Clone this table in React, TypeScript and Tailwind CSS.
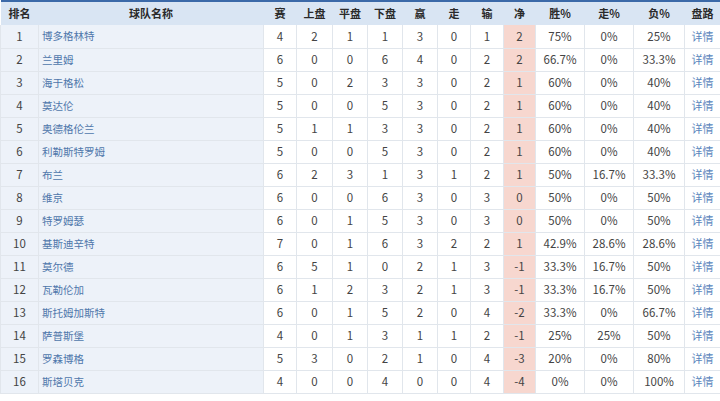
import React from 'react';

type Row = [number, string, number, number, number, number, number, number, number, number, string, string, string];

const rows: Row[] = [
  [1, '博多格林特', 4, 2, 1, 1, 3, 0, 1, 2, '75%', '0%', '25%'],
  [2, '兰里姆', 6, 0, 0, 6, 4, 0, 2, 2, '66.7%', '0%', '33.3%'],
  [3, '海于格松', 5, 0, 2, 3, 3, 0, 2, 1, '60%', '0%', '40%'],
  [4, '莫达伦', 5, 0, 0, 5, 3, 0, 2, 1, '60%', '0%', '40%'],
  [5, '奥德格伦兰', 5, 1, 1, 3, 3, 0, 2, 1, '60%', '0%', '40%'],
  [6, '利勒斯特罗姆', 5, 0, 0, 5, 3, 0, 2, 1, '60%', '0%', '40%'],
  [7, '布兰', 6, 2, 3, 1, 3, 1, 2, 1, '50%', '16.7%', '33.3%'],
  [8, '维京', 6, 0, 0, 6, 3, 0, 3, 0, '50%', '0%', '50%'],
  [9, '特罗姆瑟', 6, 0, 1, 5, 3, 0, 3, 0, '50%', '0%', '50%'],
  [10, '基斯迪辛特', 7, 0, 1, 6, 3, 2, 2, 1, '42.9%', '28.6%', '28.6%'],
  [11, '莫尔德', 6, 5, 1, 0, 2, 1, 3, -1, '33.3%', '16.7%', '50%'],
  [12, '瓦勒伦加', 6, 1, 2, 3, 2, 1, 3, -1, '33.3%', '16.7%', '50%'],
  [13, '斯托姆加斯特', 6, 0, 1, 5, 2, 0, 4, -2, '33.3%', '0%', '66.7%'],
  [14, '萨普斯堡', 4, 0, 1, 3, 1, 1, 2, -1, '25%', '25%', '50%'],
  [15, '罗森博格', 5, 3, 0, 2, 1, 0, 4, -3, '20%', '0%', '80%'],
  [16, '斯塔贝克', 4, 0, 0, 4, 0, 0, 4, -4, '0%', '0%', '100%'],
];

const headers = ['排名', '球队名称', '赛', '上盘', '平盘', '下盘', '赢', '走', '输', '净', '胜%', '走%', '负%', '盘路'];
const widths = [38, 225, 33, 36, 35, 35, 35, 33, 33, 32, 49, 49, 51, 36];

const cell = 'h-[23px] p-0 border-r border-b border-[#e1e6ec] text-center align-middle';

export default function App() {
  return (
    <div
      className="w-[720px] h-[401px] bg-white overflow-hidden text-[11.5px] text-[#444]"
      style={{ fontFamily: '"Noto Sans CJK SC", "Noto Sans", sans-serif' }}
    >
      <table className="table-fixed border-collapse w-[720px]">
        <colgroup>
          {widths.map((w, i) => (
            <col key={i} style={{ width: w }} />
          ))}
        </colgroup>
        <thead>
          <tr className="bg-[#d9e5f3] border-t-2 border-[#3b69a8]">
            {headers.map((h, i) => (
              <th key={i} className="h-[24px] p-0 font-bold text-[11px] text-[#2a2a2a] text-center align-middle">
                {h}
              </th>
            ))}
          </tr>
        </thead>
        <tbody>
          {rows.map(r => (
            <tr key={r[0]}>
              <td className={`${cell} bg-[#edf2f9] border-l`}>{r[0]}</td>
              <td className={`${cell} bg-[#edf2f9] text-left pl-[3px] text-[10.5px] text-[#4f77ab]`}>{r[1]}</td>
              <td className={cell}>{r[2]}</td>
              <td className={cell}>{r[3]}</td>
              <td className={cell}>{r[4]}</td>
              <td className={cell}>{r[5]}</td>
              <td className={cell}>{r[6]}</td>
              <td className={cell}>{r[7]}</td>
              <td className={cell}>{r[8]}</td>
              <td className={`${cell} bg-[#f7d7cf]`}>{r[9]}</td>
              <td className={cell}>{r[10]}</td>
              <td className={cell}>{r[11]}</td>
              <td className={cell}>{r[12]}</td>
              <td className={`${cell} text-[11px] text-[#5a86bd]`}>详情</td>
            </tr>
          ))}
        </tbody>
      </table>
    </div>
  );
}
